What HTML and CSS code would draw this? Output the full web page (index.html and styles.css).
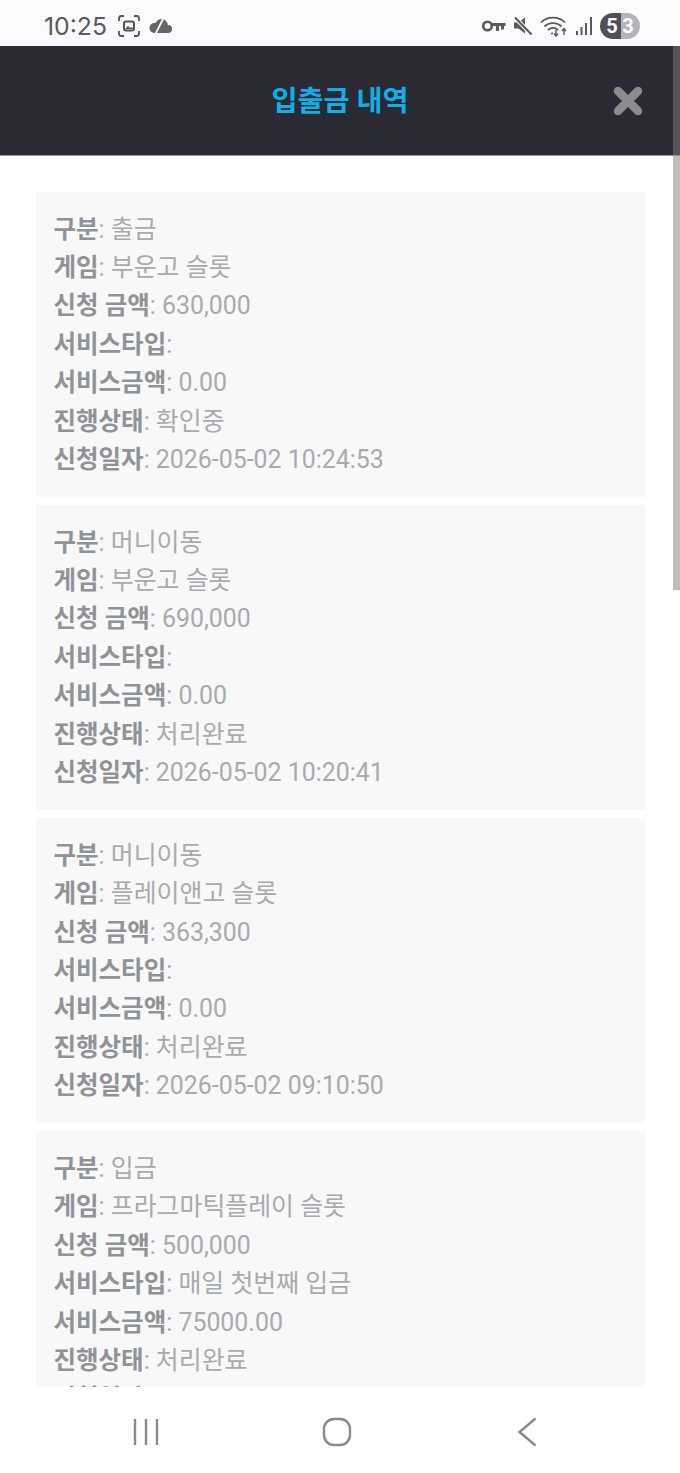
FILE: index.html
```html
<!DOCTYPE html>
<html lang="ko">
<head>
  <meta charset="UTF-8" />
  <meta name="viewport" content="width=device-width, initial-scale=1.0" />
  <title>입출금 내역</title>
  <link rel="stylesheet" href="styles.css">
</head>
<body>
  <div class="status-bar">
    <div class="status-left">
      <span class="clock">10:25</span>
      <svg class="icon-shot" width="24" height="24" viewBox="0 0 24 24" fill="none" stroke="#555" stroke-width="1.8">
        <path d="M2 7V4.500A2.500 2.500 0 0 1 4.500 2H7M17 2h2.500A2.500 2.500 0 0 1 22 4.500V7M22 17v2.500a2.500 2.500 0 0 1-2.500 2.500H17M7 22H4.500A2.500 2.500 0 0 1 2 19.500V17"/>
        <rect x="7" y="7.500" width="10" height="9" rx="2" stroke-width="2"/>
        <path d="M8 15l3-3 2 2 1.500-1 2 2z" fill="#555" stroke="none"/>
      </svg>
      <svg class="icon-cloud" width="24" height="16" viewBox="0 0 24 16" fill="#666">
        <circle cx="12.500" cy="7.500" r="6.500"/>
        <circle cx="5.500" cy="10" r="5"/>
        <circle cx="19" cy="11" r="4"/>
        <rect x="5" y="11" width="14" height="4"/>
        <path d="M14.500 0L6.500 16" stroke="#fbfbfd" stroke-width="1.800"/>
      </svg>
    </div>
    <div class="status-right">
      <svg class="icon-key" width="24" height="14" viewBox="0 0 24 14" fill="none" stroke="#5a5a5a">
        <circle cx="5.500" cy="7" r="4.300" stroke-width="2.600"/>
        <path d="M9.500 5.500h14M15.500 5.500v6.500M20.500 5.500v5" stroke-width="3"/>
      </svg>
      <svg class="icon-mute" width="20" height="20" viewBox="0 0 20 20">
        <path d="M1 6.500h4.500L12 1.500v16L5.500 12.500H1z" fill="#5a5a5a"/>
        <path d="M2 1.500L18.500 18.500" stroke="#fbfbfd" stroke-width="4"/>
        <path d="M2 1.500L18.500 18.500" stroke="#5a5a5a" stroke-width="2"/>
      </svg>
      <svg class="icon-wifi" width="28" height="22" viewBox="0 0 28 22" fill="none" stroke="#5a5a5a" stroke-width="1.800">
        <path d="M1 7.500C7 1 19 1 25 7.500M4.500 11.500C9 7 17 7 21.500 11.500M8 15c3-2.500 7-2.500 10 0"/>
        <path d="M16 15v6M14 18.500l2 2.500 2-2.500M24 20v-6M22 16l2-2.500 2 2.500" stroke-width="1.400"/>
        <circle cx="12" cy="18.500" r="1.100" fill="#5a5a5a" stroke="none"/>
      </svg>
      <svg class="icon-signal" width="18" height="20" viewBox="0 0 18 20" fill="#5a5a5a">
        <rect x="1" y="15" width="2" height="4"/>
        <rect x="5.500" y="11" width="2" height="8"/>
        <rect x="10" y="7" width="2" height="12"/>
        <rect x="15" y="1" width="2" height="18"/>
      </svg>
      <div class="battery"><span class="battery-used">5</span><span class="battery-left">3</span></div>
    </div>
  </div>

  <div class="top-bar">
    <h1>입출금 내역</h1>
    <svg class="close-icon" width="30" height="30" viewBox="0 0 30 30">
      <path d="M5 5L25 25M25 5L5 25" stroke="#8c8c8c" stroke-width="8.500" stroke-linecap="round"/>
    </svg>
  </div>

  <div class="scroll-thumb"></div>

  <div class="content">
    <div class="record">
      <p><strong>구분</strong>: 출금</p>
      <p><strong>게임</strong>: 부운고 슬롯</p>
      <p><strong>신청 금액</strong>: 630,000</p>
      <p><strong>서비스타입</strong>:</p>
      <p><strong>서비스금액</strong>: 0.00</p>
      <p><strong>진행상태</strong>: 확인중</p>
      <p><strong>신청일자</strong>: 2026-05-02 10:24:53</p>
    </div>

    <div class="record">
      <p><strong>구분</strong>: 머니이동</p>
      <p><strong>게임</strong>: 부운고 슬롯</p>
      <p><strong>신청 금액</strong>: 690,000</p>
      <p><strong>서비스타입</strong>:</p>
      <p><strong>서비스금액</strong>: 0.00</p>
      <p><strong>진행상태</strong>: 처리완료</p>
      <p><strong>신청일자</strong>: 2026-05-02 10:20:41</p>
    </div>

    <div class="record">
      <p><strong>구분</strong>: 머니이동</p>
      <p><strong>게임</strong>: 플레이앤고 슬롯</p>
      <p><strong>신청 금액</strong>: 363,300</p>
      <p><strong>서비스타입</strong>:</p>
      <p><strong>서비스금액</strong>: 0.00</p>
      <p><strong>진행상태</strong>: 처리완료</p>
      <p><strong>신청일자</strong>: 2026-05-02 09:10:50</p>
    </div>

    <div class="record">
      <p><strong>구분</strong>: 입금</p>
      <p><strong>게임</strong>: 프라그마틱플레이 슬롯</p>
      <p><strong>신청 금액</strong>: 500,000</p>
      <p><strong>서비스타입</strong>: 매일 첫번째 입금</p>
      <p><strong>서비스금액</strong>: 75000.00</p>
      <p><strong>진행상태</strong>: 처리완료</p>
      <p><strong>신청일자</strong>: 2026-05-02 09:02:17</p>
    </div>
  </div>

  <div class="nav-bar">
    <svg width="30" height="28" viewBox="0 0 30 28" stroke="#8a8a8a" stroke-width="2.400">
      <path d="M4 1v26M15 1v26M26 1v26"/>
    </svg>
    <svg class="nav-home" width="30" height="30" viewBox="0 0 30 30" fill="none" stroke="#8a8a8a" stroke-width="2.400">
      <rect x="2" y="2" width="26" height="26" rx="10"/>
    </svg>
    <svg width="20" height="30" viewBox="0 0 20 30" fill="none" stroke="#8a8a8a" stroke-width="2.400">
      <path d="M18.500 1.500L2.500 15l16 13.500"/>
    </svg>
  </div>
</body>
</html>
```

FILE: styles.css
```css
html, body {
  margin: 0;
  height: 100%;
}

body {
  display: flex;
  flex-direction: column;
  height: 1473px;
  overflow: hidden;
  position: relative;
  background: #fff;
  font-family: 'Roboto', 'Noto Sans CJK KR', sans-serif;
}

.status-bar {
  height: 46px;
  flex: none;
  display: flex;
  justify-content: space-between;
  align-items: center;
  padding: 6px 40px 0 44px;
  box-sizing: border-box;
  background: #fbfbfd;
  color: #555;
}

.status-left,
.status-right {
  display: flex;
  align-items: center;
}

.status-left {
  gap: 8px;
}

.status-right {
  gap: 7px;
}

.clock {
  font-size: 24.800px;
  font-family: 'Inter', 'Roboto', sans-serif;
  margin-right: 2px;
  color: #5a5a5a;
}

.battery {
  display: flex;
  width: 40px;
  height: 26px;
  border-radius: 13px;
  overflow: hidden;
  font-size: 20px;
  font-weight: 700;
  line-height: 26px;
  text-align: center;
  color: #fff;
}

.battery-used {
  width: 21px;
  padding-left: 3px;
  box-sizing: border-box;
  background: #4f4f55;
}

.battery-left {
  width: 19px;
  padding-right: 5px;
  box-sizing: border-box;
  background: #b4b4b8;
}

.top-bar {
  height: 110px;
  flex: none;
  display: flex;
  align-items: center;
  justify-content: center;
  position: relative;
  background: #2a2a35;
  border-bottom: 1px solid #999;
  box-sizing: border-box;
}

.top-bar h1 {
  margin: 0 0 4px;
  font-size: 28.300px;
  font-weight: 700;
  color: #12aee8;
}

.close-icon {
  position: absolute;
  right: 37px;
  top: 40px;
}

/* page scrollbar, drawn over the header as well */
.scroll-thumb {
  position: absolute;
  top: 46px;
  right: 0;
  width: 7px;
  height: 544px;
  background: rgba(126, 126, 126, 0.51);
}

.content {
  flex: 1;
  min-height: 0;
  overflow: hidden;
  padding: 36px 35px 0 36px;
  background: #fff;
}

.record {
  background: #f8f8f9;
  padding: 18.500px 18px 17.500px 17.500px;
  margin-bottom: 8.300px;
}

.record p {
  margin: 0;
  font-size: 24.900px;
  line-height: 38.400px;
  color: #a8aaac;
}

.record strong {
  font-size: 24.500px;
  font-weight: 700;
  color: #909396;
}

.nav-bar {
  height: 86px;
  flex: none;
  display: flex;
  justify-content: space-between;
  align-items: center;
  padding: 4px 143px 0 131px;
  box-sizing: border-box;
  background: #fff;
}

.nav-home {
  margin-right: 5px;
}
```
